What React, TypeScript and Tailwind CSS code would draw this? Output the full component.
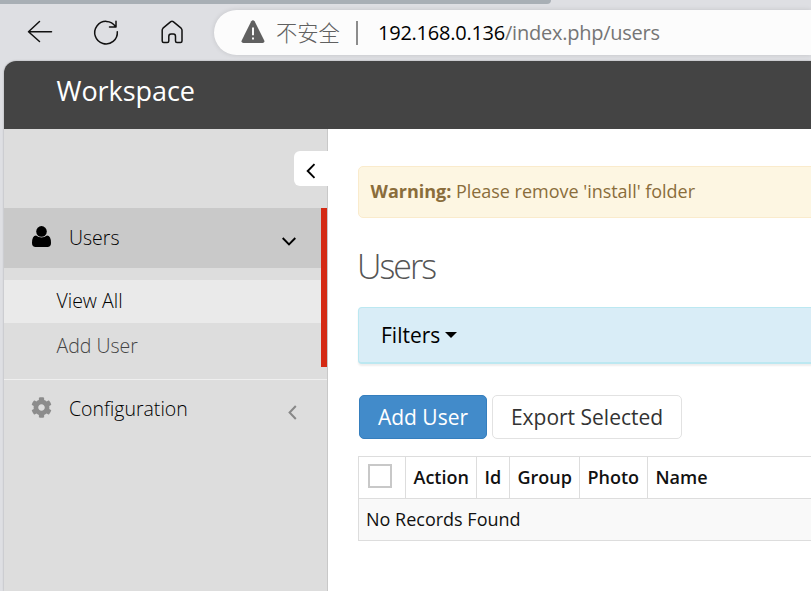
import { FaCog } from "react-icons/fa";

const columns = [
  { label: "Action", width: "w-[71px]" },
  { label: "Id", width: "w-[33px]" },
  { label: "Group", width: "w-[70px]" },
  { label: "Photo", width: "w-[68px]" },
];

function BrowserBar() {
  return (
    <div className="h-[61px] bg-[#dedfe3]">
      <div className="h-1 w-[551px] rounded-br-[6px] bg-[#a8afb5]" />
      <div className="flex h-[57px] pt-1.5">
        <svg className="h-[48px] w-[214px] shrink-0" viewBox="0 10 214 48" fill="none" stroke="#111" strokeWidth="1.5" strokeLinecap="round" strokeLinejoin="round">
          <path d="M51.5 31.7H28.5M39.5 21.5L28.5 31.7L39.5 41.5" />
          <path d="M115.5 26.5A11.3 11.3 0 1 0 117.3 31.8M116 21.3V27H109.5" />
          <path d="M162.2 41V30.2Q162.2 29 163 28.2L170.8 21.7Q172 20.8 173.2 21.7L181.1 28.2Q182 29 182 30.2V41Q182 42.5 180.5 42.5H177Q175.5 42.5 175.5 41V36.5Q175.5 34 173.5 34H171Q168.8 34 168.8 36.5V41Q168.8 42.5 167.3 42.5H163.7Q162.2 42.5 162.2 41Z" />
        </svg>
        <div className="flex h-[45px] flex-1 items-center rounded-l-full bg-[#fcfcfc] pl-[27px] shadow-[0_0_5px_rgba(0,0,0,0.12)]">
          <svg className="mb-[2px] h-[23px] w-[24px]" viewBox="0 0 25 23" preserveAspectRatio="none">
            <path d="M10.7 1.3Q12.4 -1 14.2 1.3L24.2 20.4Q25 22.8 22.5 23H2.5Q0 22.8.7 20.4Z" fill="#606060" />
            <path d="M12.5 7.6V15.2M12.5 17.6V19.6" stroke="#fff" strokeWidth="2" />
          </svg>
          <span className="ml-[11px] w-[65px] whitespace-nowrap font-['Noto_Sans_CJK_SC',sans-serif] text-[21.3px] leading-[43px] font-light text-[#606060]"><span className="block h-[45px]">不安全</span></span>
          <span className="ml-[15px] h-6 w-[2px] bg-[#8c8c8c]" />
          <span className="ml-5 whitespace-nowrap font-['Open_Sans',sans-serif] text-[20px] leading-[45px] tracking-[-0.24px] text-[#757575]">
            <span className="text-black">192.168.0.136</span>/index.php/users
          </span>
        </div>
      </div>
    </div>
  );
}

function Sidebar() {
  return (
    <aside className="w-[324px] shrink-0 border-r border-[#c8c8c8] bg-[#ddd]">
      <div className="flex h-[79px] justify-end pt-[22px]">
        <button className="-mr-px flex h-[35px] w-[34px] items-center justify-center rounded-l-[6px] bg-white">
          <svg className="mt-1 h-4 w-2.5" viewBox="0 0 10 16" fill="none" stroke="#000" strokeWidth="1.9"><path d="M8.5 1.2L1.7 8L8.5 14.8" /></svg>
        </button>
      </div>
      <div className="h-[159px] border-r-[6px] border-[#d42a14]">
        <div className="flex h-[60px] items-center bg-[#c9c9c9] pl-[28px]">
          <svg className="mb-[4px] h-[21px] w-[19px]" viewBox="0 0 19 21">
            <circle cx="9.5" cy="5.4" r="5.3" />
            <path d="M4 9.6Q0 10 0 17Q0 21 3.7 21H15.3Q19 21 19 17Q19 10 15 9.6Q9.5 13.6 4 9.6Z" />
          </svg>
          <span className="ml-[18px] h-[60px] text-[19.5px] leading-[60px] font-light">Users</span>
          <svg className="mt-[6px] mr-[24px] ml-auto h-[9px] w-4" viewBox="0 0 16 9" fill="none" stroke="#000" strokeWidth="1.9"><path d="M1.7 1L8 7.4L14.3 1" /></svg>
        </div>
        <div className="mt-3 h-[43px] bg-[#eaeaea] pl-[52.5px] text-[19.5px] leading-[41px] font-light">View All</div>
        <div className="h-[44px] pl-[52.5px] text-[19.5px] leading-[45px] font-light text-[#444]">Add User</div>
      </div>
      <div className="mt-3 flex h-[60px] items-center border-t border-[#efefef] pl-[27px]">
        <FaCog className="mb-[4px] size-[21px] text-[#8c8c8c]" />
        <span className="ml-[17px] h-[59px] text-[19.5px] leading-[57px] font-light">Configuration</span>
        <svg className="mt-[6px] mr-[30px] ml-auto h-[15px] w-[9px]" viewBox="0 0 9 15" fill="none" stroke="#888" strokeWidth="2"><path d="M7.8 1L1.6 7.5L7.8 14" /></svg>
      </div>
    </aside>
  );
}

function Content() {
  return (
    <main className="min-w-0 flex-1 overflow-hidden bg-white pt-[37px] pl-[30px]">
      <div className="h-[52px] w-[500px] rounded-[5px] border border-[#faebcc] bg-[#fdf6e2] pl-[11.5px] text-[18px] leading-[49px] tracking-[-0.02px] text-[#8a6d3b]">
        <strong className="font-bold">Warning:</strong> Please remove 'install' folder
      </div>
      <h1 className="-ml-px mt-[22px] h-[53px] text-[34px] leading-[53px] font-light tracking-[-2px] text-[#555]">Users</h1>
      <div className="mt-[14px] flex h-[57px] w-[500px] items-center rounded-[4px] border border-b-2 border-[#bce8f1] bg-[#d9edf7] pt-[2px] pl-[22px] text-[21px] shadow-[0_2px_2px_rgba(0,0,0,0.07)]">
        <span>Filters</span>
        <span className="mb-[2px] ml-[5px] border-x-[6px] border-t-[6px] border-x-transparent border-t-black" />
      </div>
      <div className="mt-[31px] flex gap-[5px] pl-px text-[21px] leading-[42px]">
        <button className="h-[44px] w-[128px] rounded-[5px] border border-[#357ebd] bg-[#428bca] text-white">Add User</button>
        <button className="h-[44px] w-[190px] rounded-[5px] border border-[#e2e2e2] bg-white text-[#333]">Export Selected</button>
      </div>
      <div className="mt-[17px] w-[500px] border border-[#ddd] text-[18px] text-[#111]">
        <div className="flex h-[42px] border-b border-[#ddd] leading-[41px] font-semibold">
          <div className="w-[47px] border-r border-[#ddd] pt-[7px] pl-[9px]">
            <div className="size-[24px] border-2 border-[#c8c8c8] bg-white" />
          </div>
          {columns.map((c) => (
            <div key={c.label} className={`${c.width} shrink-0 border-r border-[#ddd] pl-[7.5px]`}>{c.label}</div>
          ))}
          <div className="pl-[7.5px]">Name</div>
        </div>
        <div className="h-[41px] bg-[#f9f9f9] pl-[7px] leading-[41px]">No Records Found</div>
      </div>
    </main>
  );
}

export default function App() {
  return (
    <div className="h-[591px] w-[811px] overflow-hidden bg-[#dedfe3] font-['Open_Sans',sans-serif] text-black">
      <BrowserBar />
      <div className="ml-1 flex h-[530px] flex-col overflow-hidden rounded-tl-[12px] shadow-[0_0_2px_rgba(0,0,0,0.3)]">
        <header className="h-[68px] shrink-0 bg-[#444] pl-[52.5px] text-[27px] leading-[60px] tracking-[-0.05px] text-white">Workspace</header>
        <div className="flex flex-1">
          <Sidebar />
          <Content />
        </div>
      </div>
    </div>
  );
}
